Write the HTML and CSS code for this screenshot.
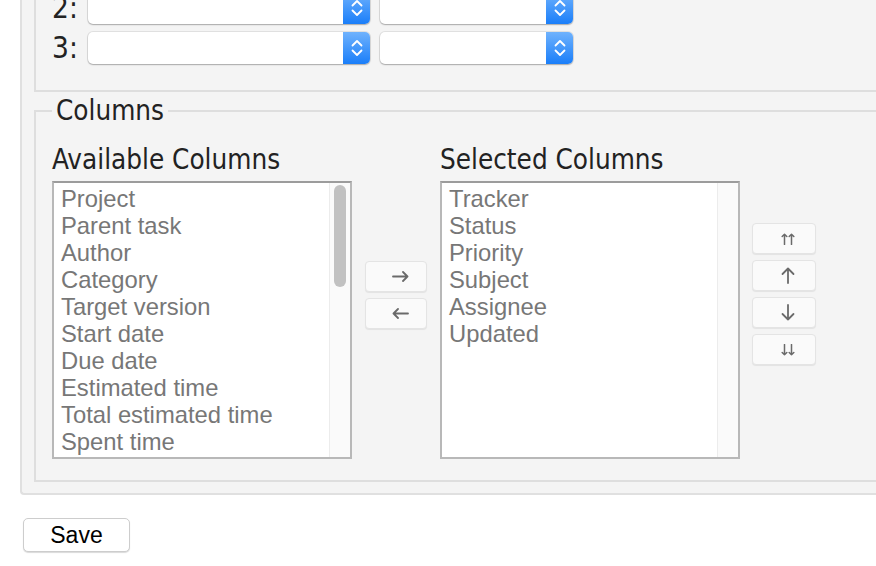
FILE: index.html
```html
<!DOCTYPE html>
<html>
<head>
<meta charset="utf-8">
<link rel="stylesheet" href="styles.css">
</head>
<body>
<div class="box">
  <div class="sort">
    <div class="sort-row">
      <span class="sort-label">1:</span>
      <span class="select wide"><span class="cap"><svg width="12" height="20" viewBox="0 0 12 20"><path d="M1.5 7.5 L6 3 L10.5 7.5 M1.5 12.5 L6 17 L10.5 12.5" fill="none" stroke="#fff" stroke-width="1.8" stroke-linecap="round" stroke-linejoin="round"/></svg></span></span>
      <span class="select narrow"><span class="cap"><svg width="12" height="20" viewBox="0 0 12 20"><path d="M1.5 7.5 L6 3 L10.5 7.5 M1.5 12.5 L6 17 L10.5 12.5" fill="none" stroke="#fff" stroke-width="1.8" stroke-linecap="round" stroke-linejoin="round"/></svg></span></span>
    </div>
    <div class="sort-row">
      <span class="sort-label">2:</span>
      <span class="select wide"><span class="cap"><svg width="12" height="20" viewBox="0 0 12 20"><path d="M1.5 7.5 L6 3 L10.5 7.5 M1.5 12.5 L6 17 L10.5 12.5" fill="none" stroke="#fff" stroke-width="1.8" stroke-linecap="round" stroke-linejoin="round"/></svg></span></span>
      <span class="select narrow"><span class="cap"><svg width="12" height="20" viewBox="0 0 12 20"><path d="M1.5 7.5 L6 3 L10.5 7.5 M1.5 12.5 L6 17 L10.5 12.5" fill="none" stroke="#fff" stroke-width="1.8" stroke-linecap="round" stroke-linejoin="round"/></svg></span></span>
    </div>
    <div class="sort-row">
      <span class="sort-label">3:</span>
      <span class="select wide"><span class="cap"><svg width="12" height="20" viewBox="0 0 12 20"><path d="M1.5 7.5 L6 3 L10.5 7.5 M1.5 12.5 L6 17 L10.5 12.5" fill="none" stroke="#fff" stroke-width="1.8" stroke-linecap="round" stroke-linejoin="round"/></svg></span></span>
      <span class="select narrow"><span class="cap"><svg width="12" height="20" viewBox="0 0 12 20"><path d="M1.5 7.5 L6 3 L10.5 7.5 M1.5 12.5 L6 17 L10.5 12.5" fill="none" stroke="#fff" stroke-width="1.8" stroke-linecap="round" stroke-linejoin="round"/></svg></span></span>
    </div>
  </div>

  <fieldset class="columns">
    <legend>Columns</legend>
    <div class="col-layout">
      <div class="col">
        <div class="col-title">Available Columns</div>
        <div class="listbox">
          <ul class="items">
            <li>Project</li>
            <li>Parent task</li>
            <li>Author</li>
            <li>Category</li>
            <li>Target version</li>
            <li>Start date</li>
            <li>Due date</li>
            <li>Estimated time</li>
            <li>Total estimated time</li>
            <li>Spent time</li>
          </ul>
          <div class="track"><div class="thumb"></div></div>
        </div>
      </div>

      <div class="move move-lr">
        <button class="mbtn narrowbtn"><svg width="17" height="11" viewBox="0 0 17 11"><path d="M1 5.5 H15.5 M11 1 L15.5 5.5 L11 10" fill="none" stroke="#6a6a6a" stroke-width="1.8" stroke-linecap="round" stroke-linejoin="round"/></svg></button>
        <button class="mbtn narrowbtn"><svg width="17" height="11" viewBox="0 0 17 11"><path d="M16 5.5 H1.5 M6 1 L1.5 5.5 L6 10" fill="none" stroke="#6a6a6a" stroke-width="1.8" stroke-linecap="round" stroke-linejoin="round"/></svg></button>
      </div>

      <div class="col">
        <div class="col-title">Selected Columns</div>
        <div class="listbox">
          <ul class="items">
            <li>Tracker</li>
            <li>Status</li>
            <li>Priority</li>
            <li>Subject</li>
            <li>Assignee</li>
            <li>Updated</li>
          </ul>
          <div class="track"></div>
        </div>
      </div>

      <div class="move move-ud">
        <button class="mbtn widebtn"><svg width="14" height="12" viewBox="0 0 14 12"><path d="M3.5 11.5 V1.2 M1.2 3.5 L3.5 1.2 L5.8 3.5 M10.5 11.5 V1.2 M8.2 3.5 L10.5 1.2 L12.8 3.5" fill="none" stroke="#6a6a6a" stroke-width="1.5" stroke-linecap="round" stroke-linejoin="round"/></svg></button>
        <button class="mbtn widebtn"><svg width="14" height="17" viewBox="0 0 14 17"><path d="M7 16 V1.5 M1.5 7 L7 1.5 L12.5 7" fill="none" stroke="#6a6a6a" stroke-width="1.8" stroke-linecap="round" stroke-linejoin="round"/></svg></button>
        <button class="mbtn widebtn"><svg width="14" height="17" viewBox="0 0 14 17"><path d="M7 1 V15.5 M1.5 10 L7 15.5 L12.5 10" fill="none" stroke="#6a6a6a" stroke-width="1.8" stroke-linecap="round" stroke-linejoin="round"/></svg></button>
        <button class="mbtn widebtn"><svg width="14" height="12" viewBox="0 0 14 12"><path d="M3.5 0.5 V10.8 M1.2 8.5 L3.5 10.8 L5.8 8.5 M10.5 0.5 V10.8 M8.2 8.5 L10.5 10.8 L12.8 8.5" fill="none" stroke="#6a6a6a" stroke-width="1.5" stroke-linecap="round" stroke-linejoin="round"/></svg></button>
      </div>
    </div>
  </fieldset>
</div>
<div class="actions"><button class="save">Save</button></div>
</body>
</html>
```
FILE: styles.css
```css
html, body {
  margin: 0;
  padding: 0;
  overflow: hidden;
  background: #fff;
}
body {
  width: 876px;
  height: 566px;
  font-family: "Liberation Sans", Arial, sans-serif;
  color: #222;
}
.box {
  margin: -76px 0 0 20px;
  width: 1000px;
  background: #f4f4f4;
  border: 2px solid #e0e0e0;
  border-right: none;
  border-radius: 0 0 0 4px;
  padding: 12px 0 11px 12px;
}
.sort {
  border: 2px solid #dedede;
  border-right: none;
  padding: 12px 0 26px 16px;
  display: flex;
  flex-direction: column;
  gap: 8px;
}
.sort-row {
  display: flex;
  align-items: center;
  height: 32px;
}
.sort-label {
  width: 36px;
  font-family: "DejaVu Sans Condensed", "DejaVu Sans", sans-serif;
  font-size: 29.5px;
  line-height: 32px;
  color: #222;
}
.select {
  height: 32px;
  box-sizing: border-box;
  background: #fff;
  border-radius: 5px;
  display: flex;
  justify-content: flex-end;
  overflow: hidden;
  box-shadow: 0 0 0 1px rgba(0, 0, 0, 0.08), 0 1px 1.5px rgba(0, 0, 0, 0.25);
}
.select.wide {
  width: 282px;
  margin-right: 10px;
}
.select.narrow {
  width: 193px;
}
.cap {
  width: 27px;
  height: 100%;
  background: linear-gradient(#6fb2fd, #1a7ef9);
  display: flex;
  align-items: center;
  justify-content: center;
}
.columns {
  margin: 2px 0 0 0;
  border: 2px solid #dedede;
  border-right: none;
  padding: 16px 0 21px 16px;
  min-width: 0;
}
.columns legend {
  padding: 0 4px;
  font-family: "DejaVu Sans Condensed", "DejaVu Sans", sans-serif;
  font-size: 27.6px;
  line-height: 33px;
  color: #222;
}
.col-layout {
  display: flex;
  align-items: flex-start;
}
.col {
  width: 300px;
}
.col-title {
  font-family: "DejaVu Sans Condensed", "DejaVu Sans", sans-serif;
  font-size: 27.6px;
  line-height: 33px;
  margin-bottom: 5px;
  color: #222;
  white-space: nowrap;
}
.listbox {
  height: 278px;
  box-sizing: border-box;
  border: 2px solid #b8b8b8;
  border-top-color: #9c9c9c;
  background: #fff;
  display: flex;
}
.items {
  flex: 1;
  list-style: none;
  margin: 0;
  padding: 2px 0 0 7px;
  font-size: 23.8px;
  line-height: 27px;
  color: #777;
  overflow: hidden;
  white-space: nowrap;
}
.track {
  width: 20px;
  border-left: 1px solid #ececec;
  background: #fafafa;
}
.thumb {
  width: 12px;
  height: 102px;
  margin: 2px 0 0 4px;
  border-radius: 6px;
  background: #c1c1c1;
}
.move {
  display: flex;
  flex-direction: column;
  gap: 6px;
}
.move-lr {
  margin: 118px 13px 0 13px;
}
.move-ud {
  margin: 80px 0 0 12px;
}
.mbtn {
  height: 31px;
  padding: 0 0 0 8px;
  margin: 0;
  background: #fafafa;
  border: 1px solid #e4e4e4;
  border-radius: 4px;
  box-shadow: 0 1px 1px rgba(0, 0, 0, 0.07);
  display: flex;
  align-items: center;
  justify-content: center;
}
.narrowbtn {
  width: 62px;
}
.widebtn {
  width: 64px;
}
.actions {
  padding: 23px 0 0 23px;
}
.save {
  width: 107px;
  height: 34px;
  padding: 0;
  font-family: "Liberation Sans", Arial, sans-serif;
  font-size: 23px;
  color: #000;
  background: #fff;
  border: 1px solid #cdcdcd;
  border-radius: 5px;
  box-shadow: 0 1px 1px rgba(0, 0, 0, 0.15);
}
```
